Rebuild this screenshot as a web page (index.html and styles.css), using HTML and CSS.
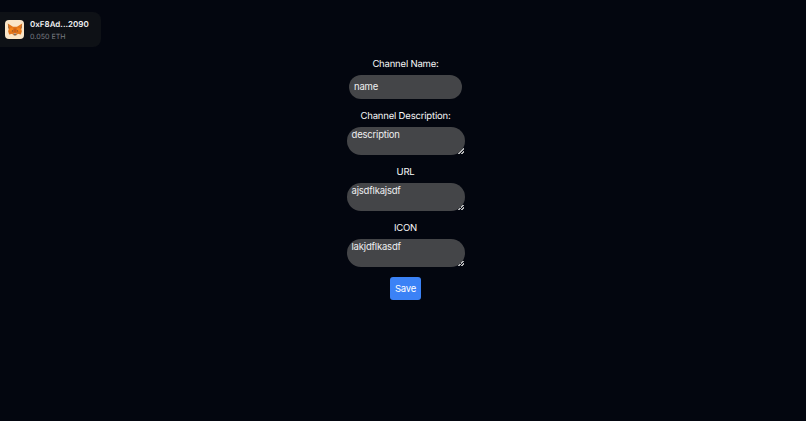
FILE: index.html
```html
<!DOCTYPE html>
<html lang="en">
<head>
<meta charset="utf-8">
<title>Channel settings</title>
<link rel="stylesheet" href="styles.css">
</head>
<body>
<div class="wallet">
  <span class="wallet-icon">
    <svg viewBox="0 0 20 20" width="16" height="16" aria-hidden="true">
      <path fill="#e2761b" d="M1 2l6.500 4h5L19 2l-1.400 6 1 3.500-1.300 4-3.800-.9L12 16.500H8l-1.500-1.900-3.800.9-1.300-4 1-3.500z"/>
      <path fill="#f6851b" d="M7 7l1 4-4.500 1L2.500 8zM13 7l-1 4 4.500 1 1-4z"/>
      <path fill="#cd6116" d="M8.500 8h3l.5 5H8z"/>
      <path fill="#c0ad9e" d="M8 14h4l-.5 2h-3z"/>
      <path fill="#233447" d="M6 10.500l2 .5-1.500 1zM14 10.500l-2 .5 1.500 1zM8.500 15.500h3l-.5 1h-2z"/>
      <path fill="#763d16" d="M1 2l2 6-1 .5zM19 2l-2 6 1 .5z"/>
    </svg>
  </span>
  <div class="wallet-text">
    <div class="wallet-addr">0xF8Ad...2090</div>
    <div class="wallet-bal">0.050 ETH</div>
  </div>
</div>
<form class="form">
  <label class="label label-first" for="name">Channel Name:</label>
  <input class="input" id="name" value="name">
  <label class="label" for="desc">Channel Description:</label>
  <textarea class="area" id="desc" spellcheck="false">description</textarea>
  <label class="label" for="url">URL</label>
  <textarea class="area" id="url" spellcheck="false">ajsdflkajsdf</textarea>
  <label class="label" for="icon">ICON</label>
  <textarea class="area" id="icon" spellcheck="false">lakjdflkasdf</textarea>
  <button class="save" type="button">Save</button>
</form>
</body>
</html>
```
FILE: styles.css
```css
html, body {
  margin: 0;
  height: 100%;
  overflow: hidden;
}
body {
  background: #03060f;
  color: #f7f8f9;
  font-family: Inter, "Liberation Sans", sans-serif;
  font-size: 9.500px;
  letter-spacing: -0.020em;
  text-rendering: geometricPrecision;
  position: relative;
}
.wallet {
  position: absolute;
  left: 0;
  top: 12px;
  width: 101px;
  height: 35px;
  box-sizing: border-box;
  padding-left: 5px;
  display: flex;
  align-items: center;
  gap: 6px;
  background: #0e1116;
  border-radius: 0 8px 8px 0;
}
.wallet-icon {
  width: 19px;
  height: 19px;
  border-radius: 4px;
  background: #fbe6c8;
  display: flex;
  align-items: center;
  justify-content: center;
}
.wallet-addr {
  font-size: 8px;
  font-weight: 600;
  line-height: 12px;
  letter-spacing: 0;
  color: #f1f2f4;
}
.wallet-bal {
  font-size: 7.100px;
  line-height: 11px;
  letter-spacing: 0;
  color: #7a7d83;
  margin-top: 1px;
}
.form {
  display: flex;
  flex-direction: column;
  align-items: center;
  padding-top: 57.500px;
  padding-left: 5px;
}
.label {
  display: block;
  line-height: 14px;
  margin-top: 10.500px;
  margin-bottom: 3.500px;
}
.label-first {
  margin-top: 0;
}
.input, .area {
  box-sizing: border-box;
  border: 0;
  outline: 0;
  margin: 0;
  background: #444548;
  color: #eeeff0;
  font: inherit;
  letter-spacing: inherit;
}
.input {
  width: 113px;
  height: 24px;
  padding: 0 5px 1px;
  border-radius: 12px;
}
.area {
  display: block;
  width: 118px;
  height: 28px;
  padding: 1px 5px 0;
  border-radius: 14px;
  line-height: 14px;
  overflow: hidden;
}
.area::-webkit-resizer {
  background:
    linear-gradient(135deg, transparent 50%, #b5b6b8 50%, #b5b6b8 60%, transparent 60%, transparent 74%, #b5b6b8 74%, #b5b6b8 84%, transparent 84%) right 1px bottom 1px / 6px 6px no-repeat;
}
.save {
  margin-top: 9.500px;
  width: 31px;
  height: 23px;
  padding: 0;
  border: 0;
  border-radius: 3px;
  background: #3b82f6;
  color: #fff;
  font: inherit;
  letter-spacing: inherit;
}
```
